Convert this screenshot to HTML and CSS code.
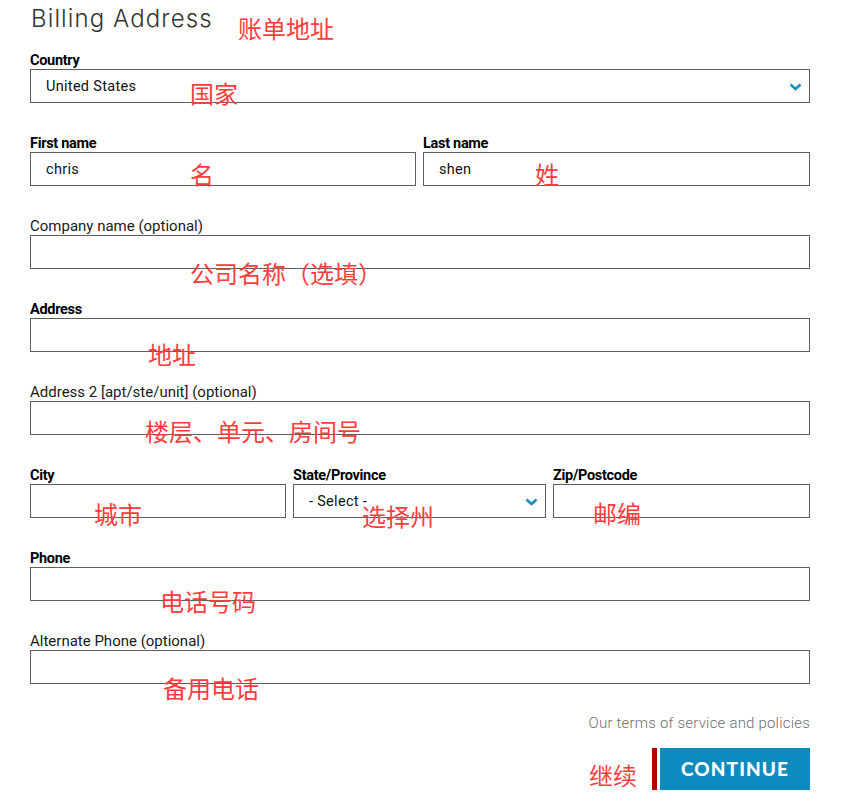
FILE: index.html
```html
<!DOCTYPE html>
<html lang="en">
<head>
<meta charset="utf-8">
<title>Billing Address</title>
<link rel="stylesheet" href="styles.css">
</head>
<body>
<div class="page">
  <form class="form">
    <h1 class="title">Billing Address</h1>

    <div class="field">
      <label class="label strong">Country</label>
      <div class="box select">
        <span class="value">United States</span>
        <svg class="chev" width="13" height="8" viewBox="0 0 13 8"><polyline points="1.5,1.5 6.5,6 11.5,1.5" fill="none" stroke="#1a8cc2" stroke-width="2.6"/></svg>
      </div>
    </div>

    <div class="field row two">
      <div>
        <label class="label strong">First name</label>
        <div class="box"><span class="value">chris</span></div>
      </div>
      <div>
        <label class="label strong">Last name</label>
        <div class="box"><span class="value">shen</span></div>
      </div>
    </div>

    <div class="field">
      <label class="label">Company name (optional)</label>
      <div class="box"></div>
    </div>

    <div class="field">
      <label class="label strong">Address</label>
      <div class="box"></div>
    </div>

    <div class="field">
      <label class="label">Address 2 [apt/ste/unit] (optional)</label>
      <div class="box"></div>
    </div>

    <div class="field row three">
      <div>
        <label class="label strong">City</label>
        <div class="box"></div>
      </div>
      <div>
        <label class="label strong">State/Province</label>
        <div class="box select">
          <span class="value">- Select -</span>
          <svg class="chev" width="13" height="8" viewBox="0 0 13 8"><polyline points="1.5,1.5 6.5,6 11.5,1.5" fill="none" stroke="#1a8cc2" stroke-width="2.6"/></svg>
        </div>
      </div>
      <div>
        <label class="label strong">Zip/Postcode</label>
        <div class="box"></div>
      </div>
    </div>

    <div class="field">
      <label class="label strong">Phone</label>
      <div class="box"></div>
    </div>

    <div class="field last">
      <label class="label">Alternate Phone (optional)</label>
      <div class="box"></div>
    </div>

    <p class="terms">Our terms of service and policies</p>

    <div class="actions">
      <span class="accent"></span>
      <button type="button" class="continue">CONTINUE</button>
    </div>
  </form>

  <div class="notes">
    <span class="note n1">账单地址</span>
    <span class="note n2">国家</span>
    <span class="note n3">名</span>
    <span class="note n4">姓</span>
    <span class="note n5">公司名称（选填）</span>
    <span class="note n6">地址</span>
    <span class="note n7">楼层、单元、房间号</span>
    <span class="note n8">城市</span>
    <span class="note n9">选择州</span>
    <span class="note n10">邮编</span>
    <span class="note n11">电话号码</span>
    <span class="note n12">备用电话</span>
    <span class="note n13">继续</span>
  </div>
</div>
</body>
</html>
```
FILE: styles.css
```css
* { box-sizing: border-box; }
html, body { margin: 0; padding: 0; background: #fff; }
body { font-family: Roboto, "Liberation Sans", sans-serif; color: #111; }

.page { position: relative; width: 856px; height: 806px; }

.form { width: 780px; margin-left: 30px; }

.title {
  margin: 0 0 14px 1px;
  font-family: Inter, Lato, "Liberation Sans", sans-serif;
  font-weight: 300;
  font-size: 24px;
  line-height: 38px;
  letter-spacing: 1.1px;
  color: #333;
}

.field { margin-bottom: 32px; }
.field.last { margin-bottom: 30px; }

.row { display: grid; column-gap: 7px; }
.row.two { grid-template-columns: 386px 387px; }
.row.three { grid-template-columns: 256px 253px 257px; }

.label {
  display: block;
  font-size: 15px;
  line-height: 17px;
  color: #1a1a1a;
}
.label.strong { font-weight: 700; font-size: 14.5px; letter-spacing: -0.3px; color: #000; }

.box {
  height: 34px;
  border: 1px solid #5f5f5f;
  display: flex;
  align-items: center;
  padding: 0 7px 0 15px;
}
.value { font-size: 14.5px; color: #111; letter-spacing: 0.3px; }
.select { justify-content: space-between; }
.chev { display: block; margin-top: 1px; }

.terms {
  margin: 0;
  text-align: right;
  font-size: 15px;
  font-weight: 300;
  line-height: 18px;
  color: #6f6f6f;
  letter-spacing: 0.2px;
}

.actions {
  display: flex;
  justify-content: flex-end;
  gap: 3px;
  margin-top: 16px;
}
.accent { width: 5px; height: 42px; background: #b50000; }
.continue {
  width: 150px;
  height: 42px;
  border: 0;
  background: #0d8bbf;
  color: #fff;
  font-family: Lato, "Open Sans", sans-serif;
  font-weight: 900;
  font-size: 19px;
  letter-spacing: 1.1px;
  padding: 0 0 2px 0;
}

.note {
  position: absolute;
  font-family: "Noto Sans CJK SC", sans-serif;
  font-size: 24px;
  line-height: 24px;
  color: #ff3d3d;
  white-space: nowrap;
}
.n1 { left: 238px; top: 16px; }
.n2 { left: 190px; top: 81px; }
.n3 { left: 190px; top: 162px; }
.n4 { left: 535px; top: 162px; }
.n5 { left: 190px; top: 261px; }
.n6 { left: 148px; top: 342px; }
.n7 { left: 145px; top: 419px; }
.n8 { left: 94px; top: 502px; }
.n9 { left: 362px; top: 504px; }
.n10 { left: 593px; top: 501px; }
.n11 { left: 160px; top: 589px; }
.n12 { left: 163px; top: 676px; }
.n13 { left: 589px; top: 763px; }
```
